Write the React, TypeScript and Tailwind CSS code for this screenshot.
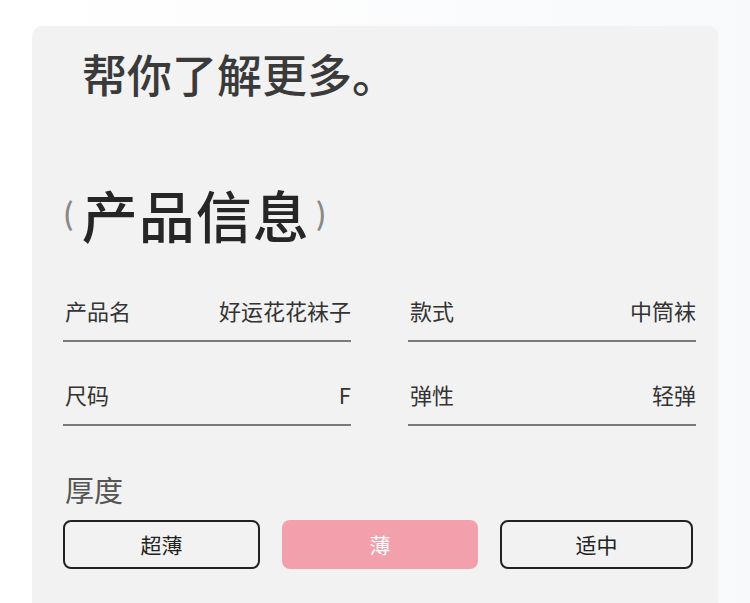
import React from 'react';

const font = { fontFamily: '"Noto Sans CJK SC", "Noto Sans", sans-serif' };

function InfoRow({ label, value }: { label: string; value: string }) {
    return (
        <div className="flex items-end justify-between h-[57px] pb-[19px] border-b-2 border-[#7a7a7a]">
            <span className="pl-[2px] text-[22px] leading-none text-[#333]">{label}</span>
            <span className="text-[22px] leading-none text-[#333]">{value}</span>
        </div>
    );
}

export default function App() {
    const options = [
        { label: '超薄', w: 'w-[197px]' },
        { label: '薄', w: 'w-[196px]' },
        { label: '适中', w: 'w-[193px]' },
    ];
    const selected = '薄';

    return (
        <div className="w-[750px] h-[603px] overflow-hidden bg-gradient-to-r from-white to-[#f8f9fb] pt-[26px] pl-[32px] pr-[32px]" style={font}>
            <div className="bg-[#f2f2f2] rounded-t-[10px] h-[600px] pl-[31px] pr-[22px]">
                {/* Header */}
                <h1 className="pl-[19px] pt-[22px] text-[45px] leading-[52px] font-medium text-[#3a3a3a]">
                    帮你了解更多。
                </h1>

                <div className="flex items-center mt-[84px] h-[60px]">
                    <span className="text-[30px] font-medium text-[#888] mr-[8px] -mt-[4px]">(</span>
                    <span className="text-[56px] leading-none font-medium text-[#262626] tracking-[1px]">产品信息</span>
                    <span className="text-[30px] font-medium text-[#888] ml-[6px] -mt-[4px]">)</span>
                </div>

                {/* Specs */}
                <div className="grid grid-cols-2 gap-x-[57px] mt-[41px]">
                    <InfoRow label="产品名" value="好运花花袜子" />
                    <InfoRow label="款式" value="中筒袜" />
                    <div className="mt-[27px]"><InfoRow label="尺码" value="F" /></div>
                    <div className="mt-[27px]"><InfoRow label="弹性" value="轻弹" /></div>
                </div>

                {/* Thickness */}
                <div className="mt-[49px] pl-[2px] text-[29px] leading-none text-[#555]">厚度</div>
                <div className="flex gap-[22px] mt-[16px]">
                    {options.map((o) => (
                        <div
                            key={o.label}
                            className={
                                o.label === selected
                                    ? `${o.w} h-[49px] rounded-[8px] bg-[#f2a0ab] text-white flex items-center justify-center text-[21px]`
                                    : `${o.w} h-[49px] rounded-[8px] border-2 border-[#222] text-[#222] flex items-center justify-center text-[21px]`
                            }
                        >
                            {o.label}
                        </div>
                    ))}
                </div>
            </div>
        </div>
    );
}
